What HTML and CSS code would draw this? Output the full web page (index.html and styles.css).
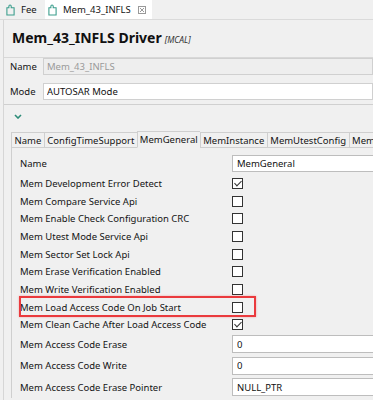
FILE: index.html
```html
<!DOCTYPE html>
<html lang="en">
<head>
    <meta charset="UTF-8">
    <title>Mem_43_INFLS Driver</title>
    <link rel="stylesheet" href="styles.css">
</head>
<body>
    <div class="tabbar">
        <div class="tab">
            <svg class="plug" viewBox="0 0 10 12" width="9" height="12"><path d="M1 11.5V3.5h2.2V1.8a1.3 1.3 0 0 1 2.6 0v1.7H9v8z" fill="none" stroke="#3a9d8c" stroke-width="1.2"/></svg>
            Fee
        </div>
        <div class="tab active">
            <svg class="plug" viewBox="0 0 10 12" width="9" height="12"><path d="M1 11.5V3.5h2.2V1.8a1.3 1.3 0 0 1 2.6 0v1.7H9v8z" fill="none" stroke="#3a9d8c" stroke-width="1.2"/></svg>
            Mem_43_INFLS
            <svg class="close" viewBox="0 0 8 8" width="8" height="8"><rect x="0.5" y="0.5" width="7" height="7" fill="none" stroke="#999"/><path d="M2 2l4 4M6 2L2 6" stroke="#999"/></svg>
        </div>
    </div>

    <div class="editor">
        <div class="title">
            <h1>Mem_43_INFLS Driver</h1>
            <span class="module">[MCAL]</span>
        </div>

        <div class="field">
            <label>Name</label>
            <input type="text" value="Mem_43_INFLS" disabled>
        </div>
        <div class="field">
            <label>Mode</label>
            <input type="text" value="AUTOSAR Mode">
        </div>

        <div class="section">
            <svg class="chevron" viewBox="0 0 8 5" width="8" height="5"><path d="M1 1l3 3 3-3" fill="none" stroke="#2d8c78" stroke-width="1.6"/></svg>
        </div>

        <div class="tabs">
            <div class="ptab">Name</div>
            <div class="ptab">ConfigTimeSupport</div>
            <div class="ptab active">MemGeneral</div>
            <div class="ptab">MemInstance</div>
            <div class="ptab">MemUtestConfig</div>
            <div class="ptab">MemUtest</div>
        </div>

        <div class="panel">
            <div class="row text"><span>Name</span><input type="text" value="MemGeneral"></div>
            <div class="row"><span>Mem Development Error Detect</span><i class="check on"></i></div>
            <div class="row"><span>Mem Compare Service Api</span><i class="check"></i></div>
            <div class="row"><span>Mem Enable Check Configuration CRC</span><i class="check"></i></div>
            <div class="row"><span>Mem Utest Mode Service Api</span><i class="check"></i></div>
            <div class="row"><span>Mem Sector Set Lock Api</span><i class="check"></i></div>
            <div class="row"><span>Mem Erase Verification Enabled</span><i class="check"></i></div>
            <div class="row"><span>Mem Write Verification Enabled</span><i class="check"></i></div>
            <div class="row marked"><span>Mem Load Access Code On Job Start</span><i class="check"></i></div>
            <div class="row"><span>Mem Clean Cache After Load Access Code</span><i class="check on"></i></div>
            <div class="row text"><span>Mem Access Code Erase</span><input type="text" value="0"></div>
            <div class="row text"><span>Mem Access Code Write</span><input type="text" value="0"></div>
            <div class="row text"><span>Mem Access Code Erase Pointer</span><input type="text" value="NULL_PTR"></div>
        </div>
    </div>
</body>
</html>
```

FILE: styles.css
```css
body {
    margin: 0;
    font-family: "Noto Sans", "Open Sans", sans-serif;
    font-size: 9.5px;
    color: #141414;
    background: #f0f0f0;
    overflow: hidden;
}
.tabbar {
    display: flex;
    height: 19px;
    border-bottom: 1px solid #dadada;
}
.tab {
    display: flex;
    align-items: center;
    gap: 6px;
    padding-left: 6px;
    width: 45px;
    box-sizing: border-box;
}
.tab.active {
    background: white;
    padding-left: 3px;
    gap: 6px;
    width: 107px;
}
.tab .close {
    margin-left: 1px;
}
.editor {
    margin-left: 3px;
    border-left: 1px solid #d6d6d6;
    height: 380px;
}
.title {
    display: flex;
    align-items: baseline;
    gap: 3px;
    height: 37px;
    padding-left: 8px;
    border-bottom: 1px solid #d8d8d8;
}
.title h1 {
    margin: 0;
    font-size: 14px;
    font-weight: bold;
    line-height: 36px;
    color: #111;
}
.title .module {
    font-style: italic;
    font-size: 8.5px;
    color: #333;
}
.field {
    display: flex;
    align-items: center;
    padding-left: 6px;
    margin-bottom: 8px;
}
.field + .field {
    margin-bottom: 4px;
}
.field label {
    width: 33px;
}
.field input {
    flex: 1;
    height: 17px;
    box-sizing: border-box;
    border: 1px solid #d0d0d0;
    background: white;
    font: inherit;
    padding: 0 3px;
    color: #111;
}
.field input:disabled {
    background: #eeeeee;
    color: #9a9a9a;
}
.section {
    border-top: 1px solid #d0d0d0;
    height: 27px;
    box-sizing: border-box;
    padding: 9px 0 0 10px;
}
.chevron {
    display: block;
}
.tabs {
    display: flex;
    margin-left: 7px;
    height: 17px;
    align-items: flex-end;
}
.ptab {
    border: 1px solid #cfcfcf;
    border-right: none;
    height: 16px;
    line-height: 15px;
    padding: 0 2.5px;
    white-space: nowrap;
    box-sizing: border-box;
}
.ptab.active {
    height: 17px;
    padding: 0 2px;
    border-bottom-color: #f0f0f0;
}
.panel {
    margin-left: 7px;
    border-left: 1px solid #cfcfcf;
    padding-top: 5px;
}
.row {
    display: grid;
    grid-template-columns: 212px 1fr;
    align-items: center;
    height: 17.7px;
    padding-left: 8px;
    position: relative;
    white-space: nowrap;
}
.row:first-child {
    height: 20.3px;
}
.row.text {
    height: 21.5px;
}
.row input {
    height: 18px;
    box-sizing: border-box;
    border: 1px solid #bdbdbd;
    background: white;
    font: inherit;
    padding: 0 4px;
    color: #111;
}
.row:first-child input {
    height: 17px;
}
.check {
    width: 11px;
    height: 11px;
    box-sizing: border-box;
    border: 1px solid #333;
    background: white;
    position: relative;
}
.check.on::after {
    content: "";
    position: absolute;
    left: 3px;
    top: 0;
    width: 3px;
    height: 6px;
    border: solid #333;
    border-width: 0 1px 1px 0;
    transform: rotate(45deg);
}
.marked::after {
    content: "";
    position: absolute;
    left: 7px;
    top: -2px;
    width: 233px;
    height: 17px;
    border: 2px solid #ea3a3d;
    box-shadow: 0 0 2px rgba(234, 58, 61, 0.4);
}
```
